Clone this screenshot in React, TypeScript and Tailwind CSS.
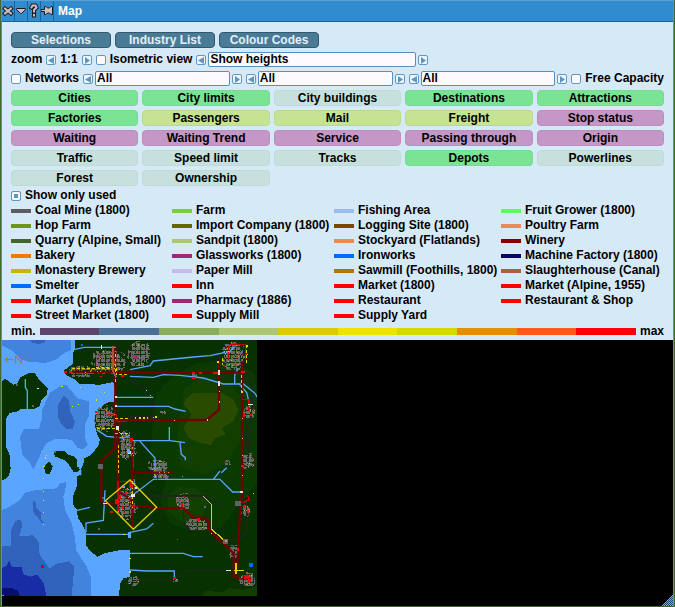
import type { ReactNode } from "react";

const GREEN = "bg-[#7be394] border-[#74dc8c]";
const LIME = "bg-[#c6e294] border-[#bcd98a]";
const PURPLE = "bg-[#c597c6] border-[#bd8dbe]";
const PALE = "bg-[#c6e1dd] border-[#bedcd3]";

const filters: [string, string][] = [
  ["Cities", GREEN], ["City limits", GREEN], ["City buildings", PALE], ["Destinations", GREEN], ["Attractions", GREEN],
  ["Factories", GREEN], ["Passengers", LIME], ["Mail", LIME], ["Freight", LIME], ["Stop status", PURPLE],
  ["Waiting", PURPLE], ["Waiting Trend", PURPLE], ["Service", PURPLE], ["Passing through", PURPLE], ["Origin", PURPLE],
  ["Traffic", PALE], ["Speed limit", PALE], ["Tracks", PALE], ["Depots", GREEN], ["Powerlines", PALE],
  ["Forest", PALE], ["Ownership", PALE],
];

const industries: [string, string][] = [
  ["Coal Mine (1800)", "bg-[#5f5b60]"], ["Farm", "bg-[#7bd131]"], ["Fishing Area", "bg-[#9cbbee]"], ["Fruit Grower (1800)", "bg-[#5aff5a]"],
  ["Hop Farm", "bg-[#6b9618]"], ["Import Company (1800)", "bg-[#666500]"], ["Logging Site (1800)", "bg-[#734a00]"], ["Poultry Farm", "bg-[#e88b5a]"],
  ["Quarry (Alpine, Small)", "bg-[#42652a]"], ["Sandpit (1800)", "bg-[#adc673]"], ["Stockyard (Flatlands)", "bg-[#e88b5a]"], ["Winery", "bg-[#840000]"],
  ["Bakery", "bg-[#ef7b00]"], ["Glassworks (1800)", "bg-[#9c2a73]"], ["Ironworks", "bg-[#006bff]"], ["Machine Factory (1800)", "bg-[#080863]"],
  ["Monastery Brewery", "bg-[#c6b600]"], ["Paper Mill", "bg-[#c6bbef]"], ["Sawmill (Foothills, 1800)", "bg-[#b57300]"], ["Slaughterhouse (Canal)", "bg-[#ad5d4a]"],
  ["Smelter", "bg-[#006bff]"], ["Inn", "bg-[#ff0000]"], ["Market (1800)", "bg-[#ff0000]"], ["Market (Alpine, 1955)", "bg-[#ff0000]"],
  ["Market (Uplands, 1800)", "bg-[#ff0000]"], ["Pharmacy (1886)", "bg-[#9c2a73]"], ["Restaurant", "bg-[#ff0000]"], ["Restaurant & Shop", "bg-[#ff0000]"],
  ["Street Market (1800)", "bg-[#ff0000]"], ["Supply Mill", "bg-[#ff0000]"], ["Supply Yard", "bg-[#ff0000]"],
];

const scale = [
  "bg-[#5c456b]", "bg-[#4a7194]", "bg-[#8aac5f]", "bg-[#adc673]", "bg-[#dec80a]",
  "bg-[#f0e208]", "bg-[#d6d800]", "bg-[#e88c00]", "bg-[#ff5a18]", "bg-[#ff0000]",
];

function TitleButton({ label, children }: { label: string; children: ReactNode }) {
  return (
    <button aria-label={label} className="flex w-[13px] items-center justify-center border-r border-[#18659c]">
      <svg viewBox="0 0 12 20" className="h-5 w-full" fill="#cdbfc6" stroke="#181c20">{children}</svg>
    </button>
  );
}

function Arrow({ dir, label }: { dir: "left" | "right"; label: string }) {
  return (
    <button aria-label={label} className="flex size-[10px] shrink-0 items-center justify-center rounded-xs border border-[#6397c2] bg-[#eef5fb]">
      <svg viewBox="0 0 8 8" className="size-2" fill="#5a97c6">
        <path d={dir === "left" ? "M7 1v7L1 4.500z" : "M2 1v7l5-3.500z"} />
      </svg>
    </button>
  );
}

function Check({ id, label, checked = false }: { id: string; label: string; checked?: boolean }) {
  return (
    <div className="flex shrink-0 items-center gap-1">
      <input
        id={id}
        type="checkbox"
        defaultChecked={checked}
        className="size-[10px] shrink-0 appearance-none rounded-xs border border-[#6397c2] bg-[#fdfaff] checked:bg-[#5a97c6] checked:shadow-[inset_0_0_0_2px_#fdfaff]"
      />
      <label htmlFor={id} className="whitespace-nowrap">{label}</label>
    </div>
  );
}

function Picker({ label, value, className }: { label: string; value: string; className: string }) {
  return (
    <div className={`flex items-center gap-[2px] ${className}`}>
      <Arrow dir="left" label={`${label}: previous`} />
      <select
        aria-label={label}
        className="h-[15px] min-w-0 flex-1 appearance-none rounded-xs border border-[#5a8fbd] bg-[#fdfaff] px-px leading-[13px]"
      >
        <option>{value}</option>
      </select>
      <Arrow dir="right" label={`${label}: next`} />
    </div>
  );
}

// Map units: three per map tile, one tile per pixel at zoom 1:1.
const towns: [number, number, number, number][] = [
  [325, 70, 52, 36], [240, 100, 42, 18], [312, 240, 32, 40], [376, 320, 18, 46], [302, 386, 8, 9],
  [415, 45, 34, 38], [700, 55, 34, 44], [745, 220, 22, 20], [742, 368, 20, 24], [472, 383, 30, 18],
  [395, 335, 14, 30], [682, 372, 10, 8], [583, 112, 8, 8], [488, 222, 10, 6],
  [548, 491, 22, 27], [590, 558, 32, 20], [700, 641, 15, 22], [740, 722, 24, 22], [400, 728, 18, 16],
  [480, 408, 26, 16], [736, 518, 14, 18], [524, 726, 10, 8], [677, 609, 8, 8], [713, 496, 8, 8],
  [374, 496, 24, 50], [400, 510, 12, 18], [398, 440, 10, 22],
];

function noise(x: number, y: number) {
  const n = Math.sin(x * 12.9898 + y * 78.233) * 43758.5453;
  return n - Math.floor(n);
}

function cells(keep: (v: number) => boolean) {
  let d = "";
  for (const [cx, cy, rx, ry] of towns) {
    for (let y = Math.ceil((cy - ry) / 3) * 3; y < cy + ry; y += 3) {
      for (let x = Math.ceil((cx - rx) / 3) * 3; x < cx + rx; x += 3) {
        const r = ((x - cx) / rx) ** 2 + ((y - cy) / ry) ** 2;
        const street = (x / 3 + Math.floor(cy)) % 5 === 0 || (y / 3) % 4 === 0;
        const v = noise(x, y);
        const block = noise(Math.floor(x / 9), Math.floor(y / 9));
        if (r < 0.45 + block * 0.9 && (!street || v > 0.65) && keep(v)) d += `M${x} ${y}h3v3h-3z`;
      }
    }
  }
  return d;
}

const redBlocks: [number, number, number, number][] = [
  [300, 113, 7, 5], [364, 110, 9, 6], [284, 218, 6, 6], [208, 100, 9, 6], [192, 100, 9, 5], [342, 70, 6, 8], [576, 118, 12, 6],
  [576, 101, 10, 6], [596, 101, 10, 6], [640, 101, 14, 6], [344, 484, 14, 14], [330, 518, 9, 6], [358, 470, 6, 12], [366, 505, 6, 9],
  [728, 226, 8, 10], [750, 228, 6, 6], [728, 502, 8, 8], [740, 516, 7, 10], [732, 710, 14, 12], [744, 722, 10, 10],
  [592, 540, 8, 10], [544, 496, 6, 10], [710, 630, 6, 8], [388, 300, 10, 8], [390, 440, 8, 10], [724, 380, 8, 6],
  [395, 500, 10, 6], [376, 462, 6, 6], [522, 718, 6, 5], [672, 604, 6, 6], [700, 14, 12, 4], [722, 98, 12, 6],
];

const pins: [number, number][] = [
  [184, 143], [240, 146], [216, 204], [234, 198], [288, 184], [311, 162], [138, 350], [134, 358], [130, 384], [129, 420],
  [129, 458], [129, 486], [129, 522], [129, 558], [438, 156], [450, 170], [466, 235], [458, 236], [440, 238], [430, 238],
  [418, 238], [404, 238], [522, 245], [620, 244], [656, 190], [656, 158], [740, 22], [740, 48], [738, 70], [652, 70],
  [725, 160], [725, 240], [725, 300], [725, 350], [725, 410], [758, 464], [370, 588], [632, 584], [388, 660], [388, 700],
];

function WorldMap() {
  return (
    <svg viewBox="6 6 765 768" role="img" aria-label="World map" className="h-64 w-[255px]" shapeRendering="crispEdges" fill="none">
      <path fill="#083100" d="M6 6h765v768H6z" />
      <path fill="#0b3a00" d="M462 190l10-25 30-32 30-28 60-28 90-12 80 40 9 60v270l-50 60-60 75-80 10-70-25-30-60 20-75-50-60 8-110z" />
      <path fill="#113f00" d="M545 200l10-50 50-30 90 20 32 50-5 110-40 75-70 35-70-25-12-80zM505 475l30-30 60 8 30 40-20 50-60 8-40-30z" />
      <path fill="#294b00" d="M555 185l25-20h85l35 20 15 30-15 35-35 20 13 20-33 10-10 22-35-8-35-14-15-30 25-40-23-32z" />
      <path fill="#113f00" d="M605 774l10-15 55 3 20-12 40 6 41-12v30z" />
      <path
        fill="#5aa5ff"
        d="M6 6h220l-2 24-6 20v28l-23 17-5 8 15 12 20 10 15 13 60 2 40-8 5 18-3 42-22 2-18 14-15 17-3 37 8 28 8 15-6 20-20 25-22 12-2 18-8 15v15l-10 5v27l-13 33v25l11 15 4 25 16 25 8 17v40l14 18 20 16 20-10 45-9 33-1v80l-20 5-10 15-3 38H6z"
      />
      <path
        fill="#083100"
        d="M12 123l12 4 15 13 13-3 8-18 25-13h20l10 15 28 31-3 18-15 15-7 20-18 9H60l-10 8-20 2-12 17v85l10 20 4 46-5 20-14 13-7 2V250V130zM162 340l32-2 10 12 20 6 10 14-4 14 10 6-2 10-16 3-12-18-14-18-32-12zM132 387l15-16 12 14-10 22-12 1z"
      />
      <path
        fill="#4283de"
        d="M6 6h208v30l-20 8-24 20-30 10-50-1-28-10-30-28-26-12zM186 142h14l10 13 25 27 33 8v40l-13 30v40l8 20-13 14-18-5-15-22-20-4h-32l-25 12-15 24-8 22-17 33-15-27-18-15-7-55 12-25h45l10-35v-22l22-50zM6 516l20-8 34-22 15-22 35-8 60-5 10-15 18-4-2 24-6 20 5 40 20 40 10 40 3 40 32 50 12 30v58H6z"
      />
      <path
        fill="#3163bd"
        d="M88 6h48l-3 7-13 5-22-3zM192 172l14 14 6 38 13 27-7 22h-18l-18-18-8-20v-35zM98 488l8 3 3 18 16 18-3 16 10 10-6 4-12-18-16-19zM6 624h26l2-48 12-28 18-2 2 18-8 30 42-2 16 20 3 38 30 42 18-14 38-8 18 14-2 26-6 64H6z"
      />
      <path fill="#182ca5" d="M6 690l14-6 8-16 7 18h30l4 22 22 8 20-7 20 26 8 39H6z" />
      <path fill="#08106b" d="M6 750h30l18 8 6 16H6z" />
      <path fill="#6b696b" d={cells((v) => v < 0.93)} />

      <path stroke="#212421" strokeWidth="4" d="M390 125l30 18 35 45 10 20-5 28H390M665 105l75-5 17 35v65l-8 80-5 90M390 460l60 14h160l60 30M740 465v120l-30 20h-30M400 728h120l40-30h130M550 515v40l20 20M395 735v20M740 255v80" />
      <g shapeRendering="auto">
        <path
          stroke="#5aa5ff"
          strokeWidth="4"
          d="M76 123v25l6 10v60M222 35l30-7h95M390 95l60-12 10-14 120-12 50-4 60-13 12-14V25M390 115l70 3 30-8 50 2 70 8 60 18h60l35 28 22 35M345 178h115M345 205h160l20 8 32 7M290 275l30 20 50 5 20-8M390 308h120l45 6M420 310l45 50v60M508 267v40M540 314l4 35 12 10v8M390 478l70-54h200l38 38h28M640 424l20-25M664 404l16-15M242 396v16M228 518l42-10M258 583v-28l52-8 5-90M254 589h136M390 583l50-10 20-17M390 646h160l30 10h28M390 696l50 3h83v25M704 136v-25l10-20M716 136l24 28 10 40M390 458l14-30"
        />
        <path
          stroke="#730000"
          strokeWidth="7"
          d="M215 102h185l10 2h320M657 65v150l-37 31H345M346 30v300l-42 40v125M726 70v390M726 466l-8 90-5 110-4 54M360 250l-5 30-2 120v60l35 20 10 25h40l32 6h80l30 28h32l15 12v20l10 16 48 42 16 18v65l12 10h40M398 310v260M390 404h130M310 496h50"
        />
      </g>
      <path stroke="#c60000" strokeWidth="4" d="M686 20h50l3 50M686 20v45M320 230h30v20h30M360 430h30v20M727 185h20v35M354 430v90M400 390v-80M727 495l20-10-5-15M388 456v40" />
      <path fill="#9c2020" d={cells((v) => v > 0.96)} />
      <path fill="#bdb129" d={cells((v) => v > 0.93 && v < 0.96)} />
      <g stroke="#ded000" strokeWidth="3">
        <path strokeDasharray="9 6" d="M215 91h130M287 88h60M348 90v20h35M345 241h45M290 271h60l15 20M345 286h40M347 48v85M355 320v90M740 20v50M668 60v20M725 110v60M397 430v80" />
        <path strokeWidth="4" shapeRendering="auto" d="M316 488l74-62 80 82-70 66z" />
        <path strokeWidth="4" d="M610 475l24 24v74l42 37M708 674v34M703 698h30" />
      </g>
      <path stroke="#a55a39" strokeWidth="6" d="M339 25v75l10 18" />
      <g fill="#ef0808">
        {redBlocks.map(([x, y, w, h]) => <rect key={`${x}-${y}`} x={x} y={y} width={w} height={h} />)}
      </g>
      <g fill="#e6de08">
        {pins.map(([x, y]) => <rect key={`${x}-${y}`} x={x} y={y} width="4" height="4" />)}
      </g>
      <path fill="#dee4e8" d="M654 96h6v16h-6zM654 128h6v16h-6zM720 460h10v6h-10zM348 265h10v10h-10zM303 22h3v10h-3zM344 174h8v6h-8zM344 202h8v6h-8zM744 198h14v4h-14zM678 695h14v4h-14zM392 468h12v8h-12zM310 494h12v4h-12zM404 448h6v6h-6zM110 149h7v4h-7zM384 340h8v8h-8z" />
      <path fill="#5aa5ff" d="M232 368h6v-7h6v7h6v16h-6v8h-6v-8h-8v-10zM384 582h8v18h-8zM6 770h5v4H6zM364 445h10v5h-10zM382 334h8v12h-8z" />
      <path fill="#006bff" d="M747 675h12v12h-12zM243 18h6v6h-6z" />
      <path fill="#c60000" d="M123 681h9v9h-9z" />
      <path fill="#636163" d="M48 137h6v6h-6zM295 570h6v6h-6zM306 477h6v6h-6zM162 340h6v4h-6zM96 202h6v6h-6zM612 504h6v6h-6zM532 603h3v3h-3zM294 378h16v16h-16zM706 489h16v14h-16zM670 604h15v14h-15z" />
      <path fill="#a53063" d="M401 50h12v12h-12z" />
      <path fill="#e88b5a" d="M365 441h6v6h-6zM674 606h7v7h-7zM546 414h3v4h-3z" />
      <path shapeRendering="auto" stroke="#b57308" strokeWidth="3" d="M16 65h24M72 65h24M24 57l-8 8 8 8M47 77V54l18 22V54" />
    </svg>
  );
}

export default function App() {
  return (
    <div className="flex min-h-screen flex-col bg-[#48642f] pb-px pl-px pr-px font-['Liberation_Sans',Arial,sans-serif] text-xs leading-[15px] font-bold text-black">
      <main className="flex flex-1 flex-col border-x border-[#5a90c0] bg-[#d6e9f7]">
        <header className="flex h-[22px] items-stretch border-t border-b border-t-[#5aa0d2] border-b-[#18659c] bg-[#318ccf]">
          <TitleButton label="Close">
            <path strokeWidth="4" strokeLinecap="square" d="M3 7.500l6 5M9 7.500l-6 5" />
            <path stroke="#cdbfc6" strokeWidth="2" strokeLinecap="square" d="M3 7.500l6 5M9 7.500l-6 5" />
          </TitleButton>
          <TitleButton label="Roll up">
            <path d="M1.500 7.500h9v1l-4 4h-1l-4-4z" />
          </TitleButton>
          <TitleButton label="Help">
            <path fill="none" strokeWidth="4" strokeLinecap="square" d="M3.500 6.500L4.500 4.500h3L8.500 6.500L6 9v2M6 14v0.500" />
            <path fill="none" stroke="#cdbfc6" strokeWidth="2" strokeLinecap="square" d="M3.500 6.500L4.500 4.500h3L8.500 6.500L6 9v1.500M6 14v0.500" />
          </TitleButton>
          <TitleButton label="Keep open">
            <path d="M0 8.500h3.500v-3h1.500l1.500 1.500h2l1.500-1.500h1.500v8h-1.500l-1.500-1.500h-2l-1.500 1.500h-1.500v-3H0z" />
          </TitleButton>
          <h1 className="pl-1 leading-5 text-white">Map</h1>
        </header>

        <section className="px-[9px] pt-[10px] pb-px">
          <nav className="flex gap-1">
            {["Selections", "Industry List", "Colour Codes"].map((name) => (
              <button key={name} className="h-4 w-[100px] rounded border border-[#31596d] bg-[#4a7b96] leading-[14px] text-[#e3eef8]">
                {name}
              </button>
            ))}
          </nav>

          <div className="mt-1 flex h-[15px] items-center gap-1">
            <span>zoom</span>
            <Arrow dir="left" label="Zoom out" />
            <span>1:1</span>
            <Arrow dir="right" label="Zoom in" />
            <Check id="isometric" label="Isometric view" />
            <Picker label="Height display" value="Show heights" className="w-[232px]" />
          </div>

          <div className="mt-1 flex h-[15px] items-center gap-1">
            <Check id="networks" label="Networks" />
            <Picker label="Transport type" value="All" className="min-w-0 flex-1" />
            <Picker label="Goods group" value="All" className="min-w-0 flex-1" />
            <Picker label="Goods" value="All" className="min-w-0 flex-1" />
            <Check id="capacity" label="Free Capacity" />
          </div>

          <div className="mt-1 grid grid-cols-5 gap-1">
            {filters.map(([name, tone]) => (
              <button key={name} className={`h-4 rounded border leading-[14px] whitespace-nowrap ${tone}`}>
                {name}
              </button>
            ))}
          </div>

          <div className="mt-[2px]">
            <Check id="used" label="Show only used" checked />
          </div>

          <ul className="grid grid-cols-[161fr_162fr_167fr_163fr]">
            {industries.map(([name, color]) => (
              <li key={name} className="flex min-w-0 items-center gap-1 whitespace-nowrap">
                <span className={`h-1 w-5 shrink-0 ${color}`} />
                {name}
              </li>
            ))}
          </ul>

          <div className="flex items-center gap-1 pt-px">
            <span>min.</span>
            <div className="flex h-[7px] flex-1">
              {scale.map((color) => <span key={color} className={`flex-1 ${color}`} />)}
            </div>
            <span>max</span>
          </div>
        </section>

        <section className="relative flex-1 bg-black">
          <WorldMap />
          <svg viewBox="0 0 12 12" className="absolute right-0 bottom-0 size-3" fill="#7ba8dc" shapeRendering="crispEdges">
            <defs>
              <pattern id="grip" width="2" height="2" patternUnits="userSpaceOnUse">
                <path d="M0 0h1v1H0zM1 1h1v1H1z" />
              </pattern>
            </defs>
            <path fill="#18457b" d="M12 0v12H0z" />
            <path fill="url(#grip)" d="M12 0v12H0z" />
          </svg>
        </section>
      </main>
    </div>
  );
}
